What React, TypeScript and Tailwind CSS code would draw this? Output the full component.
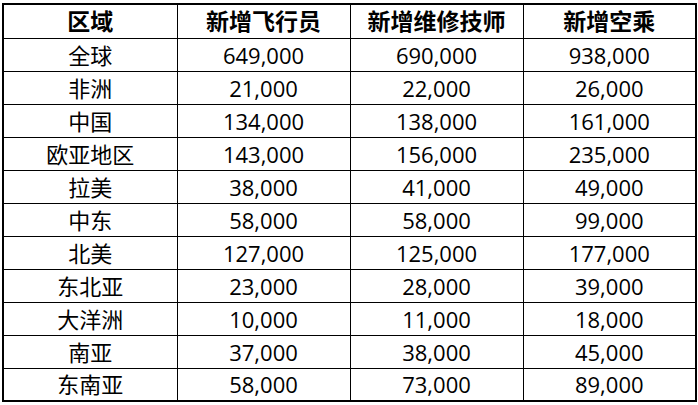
const headers = ['区域', '新增飞行员', '新增维修技师', '新增空乘'];

const rows: [string, string, string, string][] = [
  ['全球', '649,000', '690,000', '938,000'],
  ['非洲', '21,000', '22,000', '26,000'],
  ['中国', '134,000', '138,000', '161,000'],
  ['欧亚地区', '143,000', '156,000', '235,000'],
  ['拉美', '38,000', '41,000', '49,000'],
  ['中东', '58,000', '58,000', '99,000'],
  ['北美', '127,000', '125,000', '177,000'],
  ['东北亚', '23,000', '28,000', '39,000'],
  ['大洋洲', '10,000', '11,000', '18,000'],
  ['南亚', '37,000', '38,000', '45,000'],
  ['东南亚', '58,000', '73,000', '89,000'],
];

export default function App() {
  return (
    <div className="w-[698px] h-[405px] bg-white pt-[3px] pl-[2px] font-['Open_Sans','Noto_Sans_CJK_SC',sans-serif] text-black">
      <table className="border-collapse border-2 border-black w-[693px] table-fixed">
        <colgroup>
          <col className="w-[174px]" />
          <col className="w-[173px]" />
          <col className="w-[173px]" />
          <col className="w-[173px]" />
        </colgroup>
        <thead>
          <tr className="h-[34px]">
            {headers.map((h) => (
              <th key={h} className="border border-black p-0 text-center text-[23px] font-bold leading-none">
                {h}
              </th>
            ))}
          </tr>
        </thead>
        <tbody>
          {rows.map((r) => (
            <tr key={r[0]} className="h-[33px]">
              {r.map((c, i) => (
                <td key={i} className="border border-black p-0 text-center text-[22px] leading-none">
                  {c}
                </td>
              ))}
            </tr>
          ))}
        </tbody>
      </table>
    </div>
  );
}
